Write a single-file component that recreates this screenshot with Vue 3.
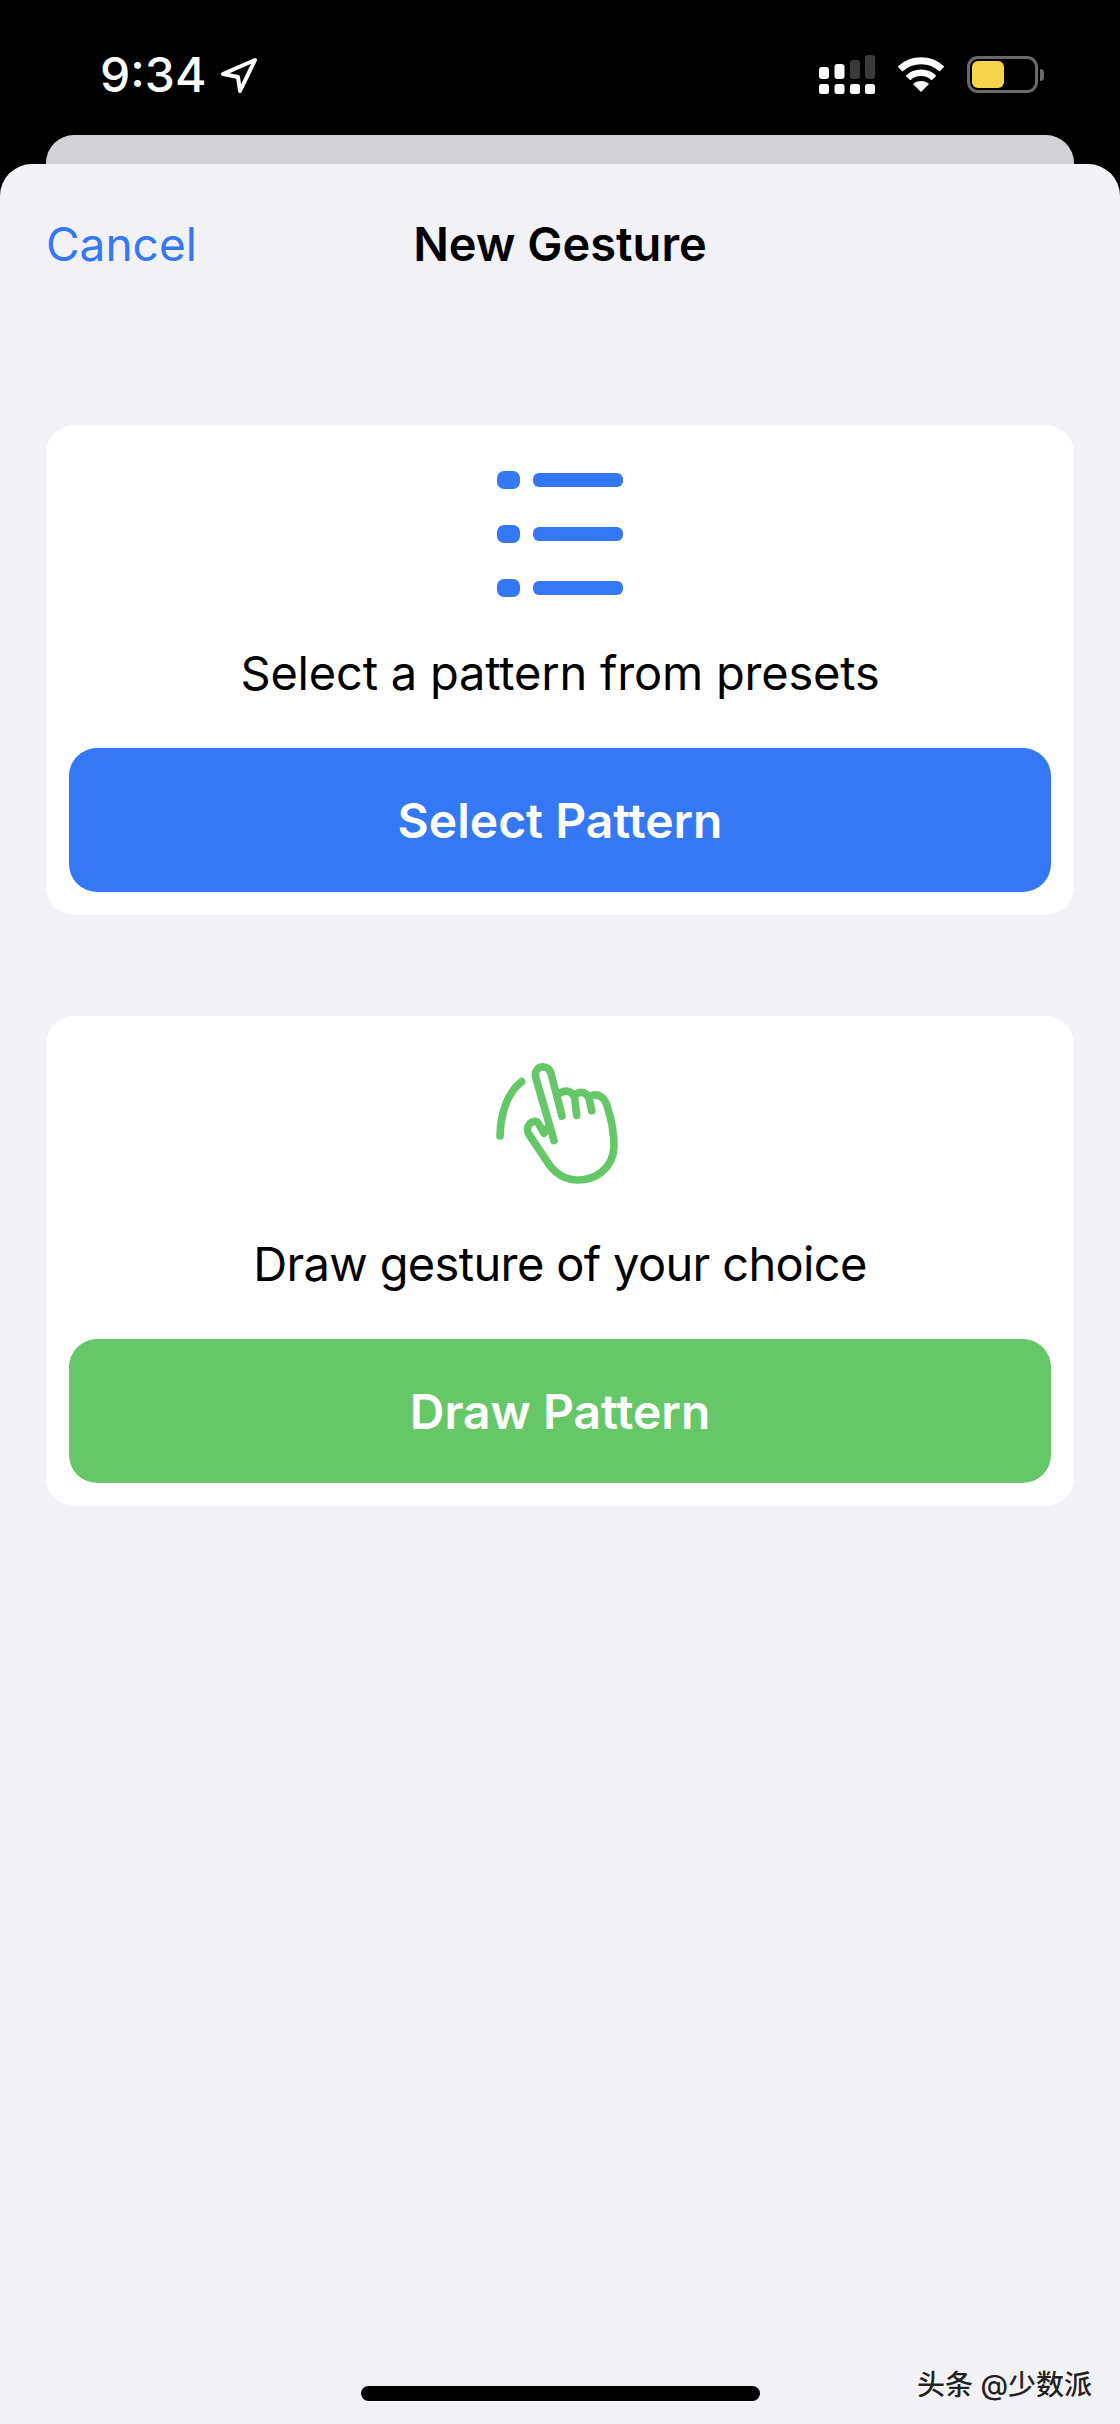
<template>
  <div class="phone">
    <!-- status bar -->
    <div class="status">
      <div class="status-left">
        <span class="time">9:34</span>
        <svg class="arrow" viewBox="0 0 38 36" width="38" height="36">
          <path d="M35 3 L3 17 L18 20 L20 34 Z" fill="none" stroke="#fff" stroke-width="4" stroke-linejoin="round" />
        </svg>
      </div>
      <div class="status-right">
        <svg class="signal" viewBox="0 0 56 39" width="56" height="39">
          <rect v-for="x in [0, 15.5, 31, 46]" :key="x" :x="x" y="29" width="10" height="10" rx="2.5" fill="#fff" />
          <rect x="0" y="12" width="10" height="12" rx="3" fill="#fff" />
          <rect x="15.5" y="9" width="10" height="15" rx="3" fill="#fff" />
          <rect x="31" y="5" width="10" height="19" rx="3" fill="#3a3a3a" />
          <rect x="46" y="0" width="10" height="24" rx="3" fill="#3a3a3a" />
        </svg>
        <svg class="wifi" viewBox="0 0 48 36" width="48" height="36">
          <path d="M3 13 C15 2 33 2 45 13" fill="none" stroke="#fff" stroke-width="7" />
          <path d="M11 22 C18 15 30 15 37 22" fill="none" stroke="#fff" stroke-width="6.5" />
          <path d="M16 28 C20 24 28 24 32 28 L24 36 Z" fill="#fff" />
        </svg>
        <div class="battery">
          <div class="battery-body"><div class="battery-fill" /></div>
          <div class="battery-nub" />
        </div>
      </div>
    </div>

    <div class="sheet-back" />

    <div class="sheet">
      <div class="nav">
        <span class="cancel">Cancel</span>
        <span class="title">New Gesture</span>
      </div>

      <div class="card first">
        <div class="pict">
          <svg viewBox="0 0 126 126" width="126" height="126">
            <g v-for="y in [0, 54, 108]" :key="y" fill="#3478f6">
              <rect x="0" :y="y" width="23" height="18" rx="7" />
              <rect x="36" :y="y + 2" width="90" height="14" rx="6" />
            </g>
          </svg>
        </div>
        <p class="label">Select a pattern from presets</p>
        <div class="btn blue">Select Pattern</div>
      </div>

      <div class="card second">
        <div class="pict">
          <svg viewBox="15 0 510 510" width="170" height="170" fill="none" stroke="#66c768" stroke-width="23" stroke-linecap="round" stroke-linejoin="round">
            <path d="M155 125 C115 155 92 215 90 288" />
            <path d="M252 302 L197 112 C190 78 232 68 243 100 L276 228" />
            <path d="M266 162 C288 145 310 155 314 175 L320 226" />
            <path d="M314 165 C335 150 352 158 358 178 L365 212" />
            <path d="M358 170 C385 155 405 175 412 200 C425 240 432 280 432 320 C430 385 375 422 320 420 C285 418 255 400 235 370 L178 285 C160 260 190 232 205 250 L222 280 L238 258" />
          </svg>
        </div>
        <p class="label">Draw gesture of your choice</p>
        <div class="btn green">Draw Pattern</div>
      </div>

      <div class="home-bar" />
    </div>

    <span class="mark">头条 @少数派</span>
  </div>
</template>

<script setup>
</script>

<style>
html, body { margin: 0; background: #000; }
</style>

<style scoped>
.phone {
  position: relative;
  width: 1120px;
  height: 2424px;
  display: flex;
  flex-direction: column;
  background: #000;
  font-family: Inter, "Liberation Sans", "Noto Sans CJK SC", sans-serif;
  overflow: hidden;
}

.status {
  height: 135px;
  flex-shrink: 0;
  display: flex;
  justify-content: space-between;
  align-items: flex-start;
  box-sizing: border-box;
  padding: 55px 76px 0 100px;
}
.status-left { display: flex; align-items: center; gap: 14px; height: 40px; }
.time { color: #fff; font-size: 48px; font-weight: 500; line-height: 40px; }
.status-right { display: flex; align-items: flex-start; gap: 22px; }
.wifi { margin-top: 1px; }

.battery { display: flex; align-items: center; gap: 2px; margin-top: 1px; }
.battery-body {
  width: 71px;
  height: 37px;
  box-sizing: border-box;
  border: 3px solid #6a6a6a;
  border-radius: 11px;
  padding: 2px;
}
.battery-fill { width: 32px; height: 100%; background: #f7d54a; border-radius: 6px; }
.battery-nub {
  width: 4px;
  height: 12px;
  background: #6a6a6a;
  border-radius: 0 6px 6px 0;
}

.sheet-back {
  height: 29px;
  flex-shrink: 0;
  margin: 0 46px;
  background: #d2d2d6;
  border-radius: 28px 28px 0 0;
}

.sheet {
  flex: 1;
  position: relative;
  background: #f1f1f6;
  border-radius: 32px 32px 0 0;
  padding: 0 46px;
}

.nav {
  position: relative;
  height: 261px;
  text-align: center;
  line-height: 58px;
  padding-top: 51px;
  box-sizing: border-box;
}
.cancel {
  position: absolute;
  left: 0;
  color: #3478f6;
  font-size: 46px;
}
.title { font-size: 47px; font-weight: 600; color: #000; }

.card {
  background: #fff;
  border-radius: 28px;
  padding: 24px 23px 23px;
}
.first { margin-bottom: 101px; }

.pict {
  height: 170px;
  display: flex;
  align-items: center;
  justify-content: center;
}

.label {
  margin: 25px 0 46px;
  text-align: center;
  font-size: 47px;
  line-height: 58px;
  color: #000;
}
.first .label { letter-spacing: -0.2px; }
.second .label { letter-spacing: -0.65px; }

.btn {
  height: 144px;
  border-radius: 28px;
  display: flex;
  align-items: center;
  justify-content: center;
  color: #fff;
  font-size: 48px;
  font-weight: 600;
}
.blue { background: #3478f6; }
.green { background: #66c768; }

.home-bar {
  position: absolute;
  left: 361px;
  bottom: 23px;
  width: 399px;
  height: 15px;
  border-radius: 8px;
  background: #000;
}

.mark {
  position: absolute;
  left: 917px;
  top: 2368px;
  font-size: 28px;
  font-weight: 500;
  line-height: 34px;
  color: #222;
  text-shadow: -1px -1px 0 #fff;
  white-space: nowrap;
}
</style>
